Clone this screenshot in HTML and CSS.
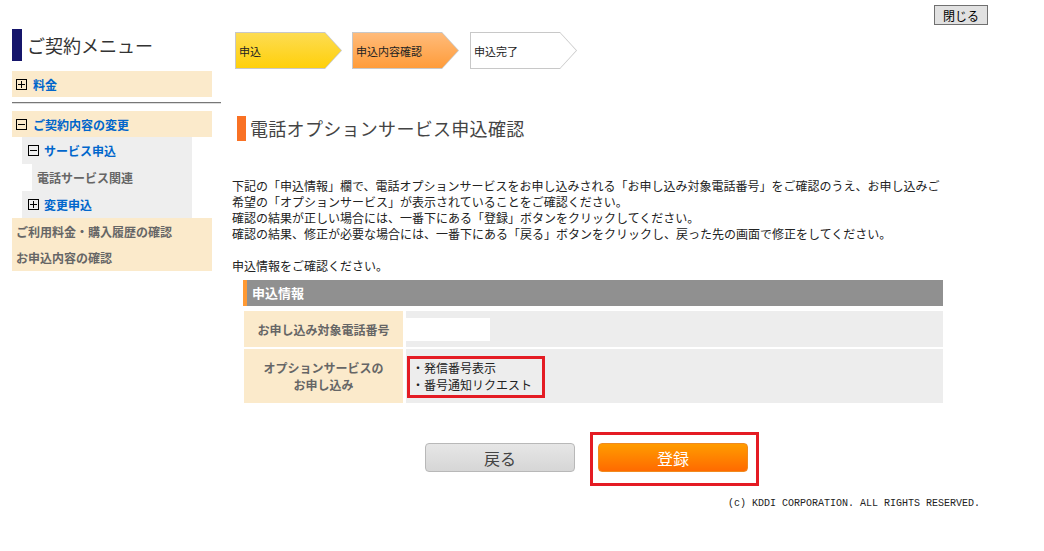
FILE: index.html
```html
<!DOCTYPE html>
<html lang="ja">
<head>
<meta charset="UTF-8">
<title>電話オプションサービス申込確認</title>
<link rel="stylesheet" href="styles.css">
</head>
<body>

<div class="page">

<aside class="side">

<div class="side-title">ご契約メニュー</div>

<div class="mitem">
<svg class="tog" width="11" height="11" viewBox="0 0 11 11"><rect x=".5" y=".5" width="10" height="10" fill="none" stroke="#000"/><path d="M2 5.5h7M5.5 2v7" stroke="#000"/></svg>
<a class="mlink">料金</a>
</div>

<hr class="side-rule">

<div class="mitem">
<svg class="tog" width="11" height="11" viewBox="0 0 11 11"><rect x=".5" y=".5" width="10" height="10" fill="none" stroke="#000"/><path d="M2 5.5h7" stroke="#000"/></svg>
<a class="mlink">ご契約内容の変更</a>
</div>

<div class="msub">
<svg class="tog" width="11" height="11" viewBox="0 0 11 11"><rect x=".5" y=".5" width="10" height="10" fill="none" stroke="#000"/><path d="M2 5.5h7" stroke="#000"/></svg>
<a class="mlink">サービス申込</a>
</div>

<div class="msub msub-deep">電話サービス関連</div>

<div class="msub">
<svg class="tog" width="11" height="11" viewBox="0 0 11 11"><rect x=".5" y=".5" width="10" height="10" fill="none" stroke="#000"/><path d="M2 5.5h7M5.5 2v7" stroke="#000"/></svg>
<a class="mlink">変更申込</a>
</div>

<div class="mitem mitem-plain">ご利用料金・購入履歴の確認</div>
<div class="mitem mitem-plain mitem-last">お申込内容の確認</div>

</aside>

<main class="main">

<div class="topbar">
<button class="close-btn">閉じる</button>
</div>

<div class="steps">
<div class="step step-done"><div class="step-in">申込</div></div>
<div class="step step-now"><div class="step-in">申込内容確認</div></div>
<div class="step step-next"><div class="step-in">申込完了</div></div>
</div>

<h2 class="heading">電話オプションサービス申込確認</h2>

<p class="lead">
下記の「申込情報」欄で、電話オプションサービスをお申し込みされる「お申し込み対象電話番号」をご確認のうえ、お申し込みご<br>
希望の「オプションサービス」が表示されていることをご確認ください。<br>
確認の結果が正しい場合には、一番下にある「登録」ボタンをクリックしてください。<br>
確認の結果、修正が必要な場合には、一番下にある「戻る」ボタンをクリックし、戻った先の画面で修正をしてください。<br>
<br>
申込情報をご確認ください。
</p>

<div class="info">
<div class="info-head">申込情報</div>
<div class="info-grid">
<div class="info-label row-1">お申し込み対象電話番号</div>
<div class="info-value row-1"><span class="tel-box"></span></div>
<div class="info-label row-2">オプションサービスの<br>お申し込み</div>
<div class="info-value row-2">
<div class="opt-box">
・発信番号表示<br>
・番号通知リクエスト
</div>
</div>
</div>
</div>

<div class="actions">
<button class="btn btn-back">戻る</button>
<div class="mark-box">
<button class="btn btn-submit">登録</button>
</div>
</div>

<div class="footer">(c) KDDI CORPORATION. ALL RIGHTS RESERVED.</div>

</main>

</div>

</body>
</html>
```

FILE: styles.css
```css
body{
margin:0;
font-family:"Noto Sans CJK JP","Liberation Sans",sans-serif;
font-size:12px;
color:#333;
background:#fff;
}

.page{
display:flex;
padding-left:12px;
}

/* left menu */

.side{
width:209px;
margin-top:29px;
}

.side-title{
height:32px;
line-height:32px;
border-left:10px solid #15156b;
padding-left:5px;
font-size:18px;
color:#333;
margin-bottom:10px;
}

.mitem{
width:200px;
height:26px;
box-sizing:border-box;
padding-left:4px;
background:#fbeacb;
display:flex;
align-items:center;
gap:6px;
font-weight:bold;
}

.mitem-plain{
color:#666;
}

.mitem-last{
height:27px;
}

.mlink{
color:#0066cc;
font-weight:bold;
}

.tog{
flex:none;
}

.side-rule{
width:209px;
margin:5px 0 7px;
border:none;
border-top:1px solid #777;
border-bottom:1px solid #ddd;
}

.msub{
width:170px;
margin-left:10px;
height:27px;
box-sizing:border-box;
padding-left:6px;
background:#eee;
display:flex;
align-items:center;
gap:5px;
font-weight:bold;
}

.msub-deep{
width:160px;
margin-left:20px;
padding-left:5px;
color:#666;
}

/* main column */

.main{
width:756px;
margin-left:11px;
}

.topbar{
height:29px;
box-sizing:border-box;
padding-top:5px;
display:flex;
justify-content:flex-end;
}

.close-btn{
width:54px;
height:20px;
padding:0;
border:1px solid #707070;
background:#e1e1e1;
font-family:"Noto Sans CJK JP",sans-serif;
font-size:12px;
color:#000;
}

.steps{
display:flex;
gap:10px;
margin-top:3px;
padding-left:3px;
}

.step{
width:107px;
height:37px;
padding:1px;
box-sizing:border-box;
background:#c8c8c8;
clip-path:polygon(0 0,90px 0,107px 50%,90px 100%,0 100%);
}

.step-in{
height:35px;
display:flex;
align-items:center;
padding-left:3px;
font-size:11px;
color:#222;
clip-path:polygon(0 0,89px 0,105px 50%,89px 100%,0 100%);
}

.step-next{
margin-left:1px;
}

.step-done .step-in{
background:linear-gradient(#fddc52,#ffd00a);
}

.step-now .step-in{
background:linear-gradient(#ffbb7a,#ff9c3a);
}

.step-next .step-in{
background:#fff;
}

.heading{
margin:47px 0 0 5px;
height:25px;
line-height:25px;
border-left:9px solid #f97124;
padding-left:4px;
font-size:18px;
letter-spacing:0.3px;
font-weight:normal;
color:#444;
}

.lead{
margin:37px 0 0;
line-height:16px;
font-size:12px;
color:#222;
white-space:nowrap;
}

/* info table */

.info{
margin:6px 0 0 11px;
width:700px;
}

.info-head{
height:26px;
line-height:26px;
background:#909090;
border-left:4px solid #ff9933;
padding-left:5px;
color:#fff;
font-size:13px;
font-weight:bold;
}

.info-grid{
display:grid;
grid-template-columns:159px 537px;
grid-template-rows:36px 54px;
column-gap:3px;
row-gap:2px;
margin:5px 0 0 1px;
}

.info-label{
background:#fbeacb;
color:#666;
font-weight:bold;
display:flex;
align-items:center;
justify-content:center;
text-align:center;
line-height:17px;
}

.info-value{
background:#ededed;
padding-top:7px;
}

.tel-box{
display:block;
width:84px;
height:23px;
background:#fff;
}

.opt-box{
width:138px;
height:42px;
box-sizing:border-box;
margin-left:1px;
border:3px solid #e41b23;
padding-left:2px;
line-height:17px;
color:#222;
}

/* buttons */

.actions{
width:700px;
margin:29px 0 0 10px;
display:flex;
justify-content:center;
align-items:flex-start;
gap:15px;
}

.btn{
width:150px;
height:29px;
border-radius:4px;
font-family:"Noto Sans CJK JP",sans-serif;
font-size:16px;
padding:0;
}

.btn-back{
margin-top:11px;
background:linear-gradient(#e6e6e6,#d6d6d6);
border:1px solid #b8b8b8;
color:#444;
}

.mark-box{
border:3px solid #e41b23;
padding:8px 8px 11px 5px;
}

.btn-submit{
display:block;
background:linear-gradient(#ff9c00,#ff6a00);
border:1px solid #f08a20;
color:#fff;
}

.footer{
margin-top:12px;
padding-right:8px;
text-align:right;
font-family:"Liberation Mono",monospace;
font-size:10px;
color:#222;
}
```
